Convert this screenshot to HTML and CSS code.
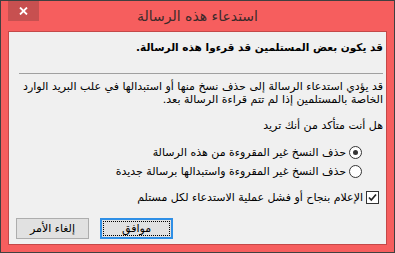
FILE: index.html
```
<!DOCTYPE html>
<html lang="ar">
<head>
<meta charset="UTF-8">
<title>استدعاء هذه الرسالة</title>
<link rel="stylesheet" href="styles.css">
</head>
<body>
<div class="window" dir="rtl">
  <div class="titlebar">
    <span class="title">استدعاء هذه الرسالة</span>
    <span class="close">
      <svg width="9" height="8" viewBox="0 0 9 8"><path d="M1 0.5 L8 7.5 M8 0.5 L1 7.5" stroke="#fff" stroke-width="1.8"/></svg>
    </span>
  </div>
  <div class="content">
    <p class="warning">قد يكون بعض المستلمين قد قرءوا هذه الرسالة.</p>
    <hr class="sep">
    <p class="info">قد يؤدي استدعاء الرسالة إلى حذف نسخ منها أو استبدالها في علب البريد الوارد<br>الخاصة بالمستلمين إذا لم تتم قراءة الرسالة بعد.</p>
    <p class="question">هل أنت متأكد من أنك تريد</p>
    <div class="options">
      <label class="option"><span class="radio checked"></span><span>حذف النسخ غير المقروءة من هذه الرسالة</span></label>
      <label class="option"><span class="radio"></span><span>حذف النسخ غير المقروءة واستبدالها برسالة جديدة</span></label>
    </div>
    <label class="check"><span class="box"><svg width="11" height="11" viewBox="0 0 11 11"><path d="M2 5.5 L4.3 8 L9 2.5" fill="none" stroke="#222" stroke-width="1.7"/></svg></span><span>الإعلام بنجاح أو فشل عملية الاستدعاء لكل مستلم</span></label>
    <div class="buttons">
      <button class="btn default"><span class="focus">موافق</span></button>
      <button class="btn">إلغاء الأمر</button>
    </div>
  </div>
</div>
</body>
</html>
```
FILE: styles.css
```
body {
  margin: 0;
  font-family: "DejaVu Sans", sans-serif;
  font-size: 11px;
  color: #000;
}

.window {
  width: 395px;
  height: 253px;
  box-sizing: border-box;
  border: 1px solid #404040;
  background-color: #f65e5e;
  display: flex;
  flex-direction: column;
}

.titlebar {
  position: relative;
  height: 30px;
  text-align: center;
}

.title {
  display: block;
  line-height: 30px;
  font-size: 14px;
  color: #3a2a2a;
}

.close {
  position: absolute;
  left: 7px;
  top: 0;
  width: 31px;
  height: 20px;
  background-color: #c75050;
  display: flex;
  align-items: center;
  justify-content: center;
}

.content {
  flex: 1;
  margin: 0 7px 7px 7px;
  border: 1px solid #c44848;
  background-color: #f0f0f0;
  padding: 9px 3px 0 7px;
}

.content p {
  margin: 0;
  line-height: 13px;
  white-space: nowrap;
}

.content .warning {
  font-weight: bold;
  font-size: 10.5px;
}

.sep {
  border: 0;
  border-top: 1px solid #a0a0a0;
  margin: 19px 0 0 3px;
  height: 0;
}

.content .info {
  margin-top: 6px;
}

.content .question {
  margin-top: 13px;
}

.options {
  margin-top: 11px;
  padding-right: 21px;
}

.option,
.check {
  display: flex;
  align-items: center;
  height: 19px;
}

.radio {
  width: 11px;
  height: 11px;
  border: 1px solid #333;
  border-radius: 50%;
  background-color: #fff;
  margin-left: 3px;
  display: flex;
  align-items: center;
  justify-content: center;
}

.radio.checked::after {
  content: "";
  width: 5px;
  height: 5px;
  border-radius: 50%;
  background-color: #333;
}

.check {
  margin-top: 7px;
  padding-right: 4px;
}

.box {
  width: 11px;
  height: 11px;
  border: 1px solid #333;
  background-color: #fff;
  margin-left: 3px;
  display: flex;
  align-items: center;
  justify-content: center;
}

.buttons {
  display: flex;
  justify-content: flex-end;
  gap: 11px;
  margin-top: 11px;
}

.btn {
  width: 73px;
  height: 21px;
  font-family: "DejaVu Sans", sans-serif;
  font-size: 11px;
  background-color: #e1e1e1;
  border: 1px solid #adadad;
  padding: 0;
  color: #000;
}

.btn.default {
  border: 1px solid #2f8fe6;
  box-shadow: inset 0 0 0 1px #2f8fe6;
  padding: 2px;
}

.focus {
  display: flex;
  align-items: center;
  justify-content: center;
  height: 100%;
  border: 1px dotted #000;
  box-sizing: border-box;
}
```
